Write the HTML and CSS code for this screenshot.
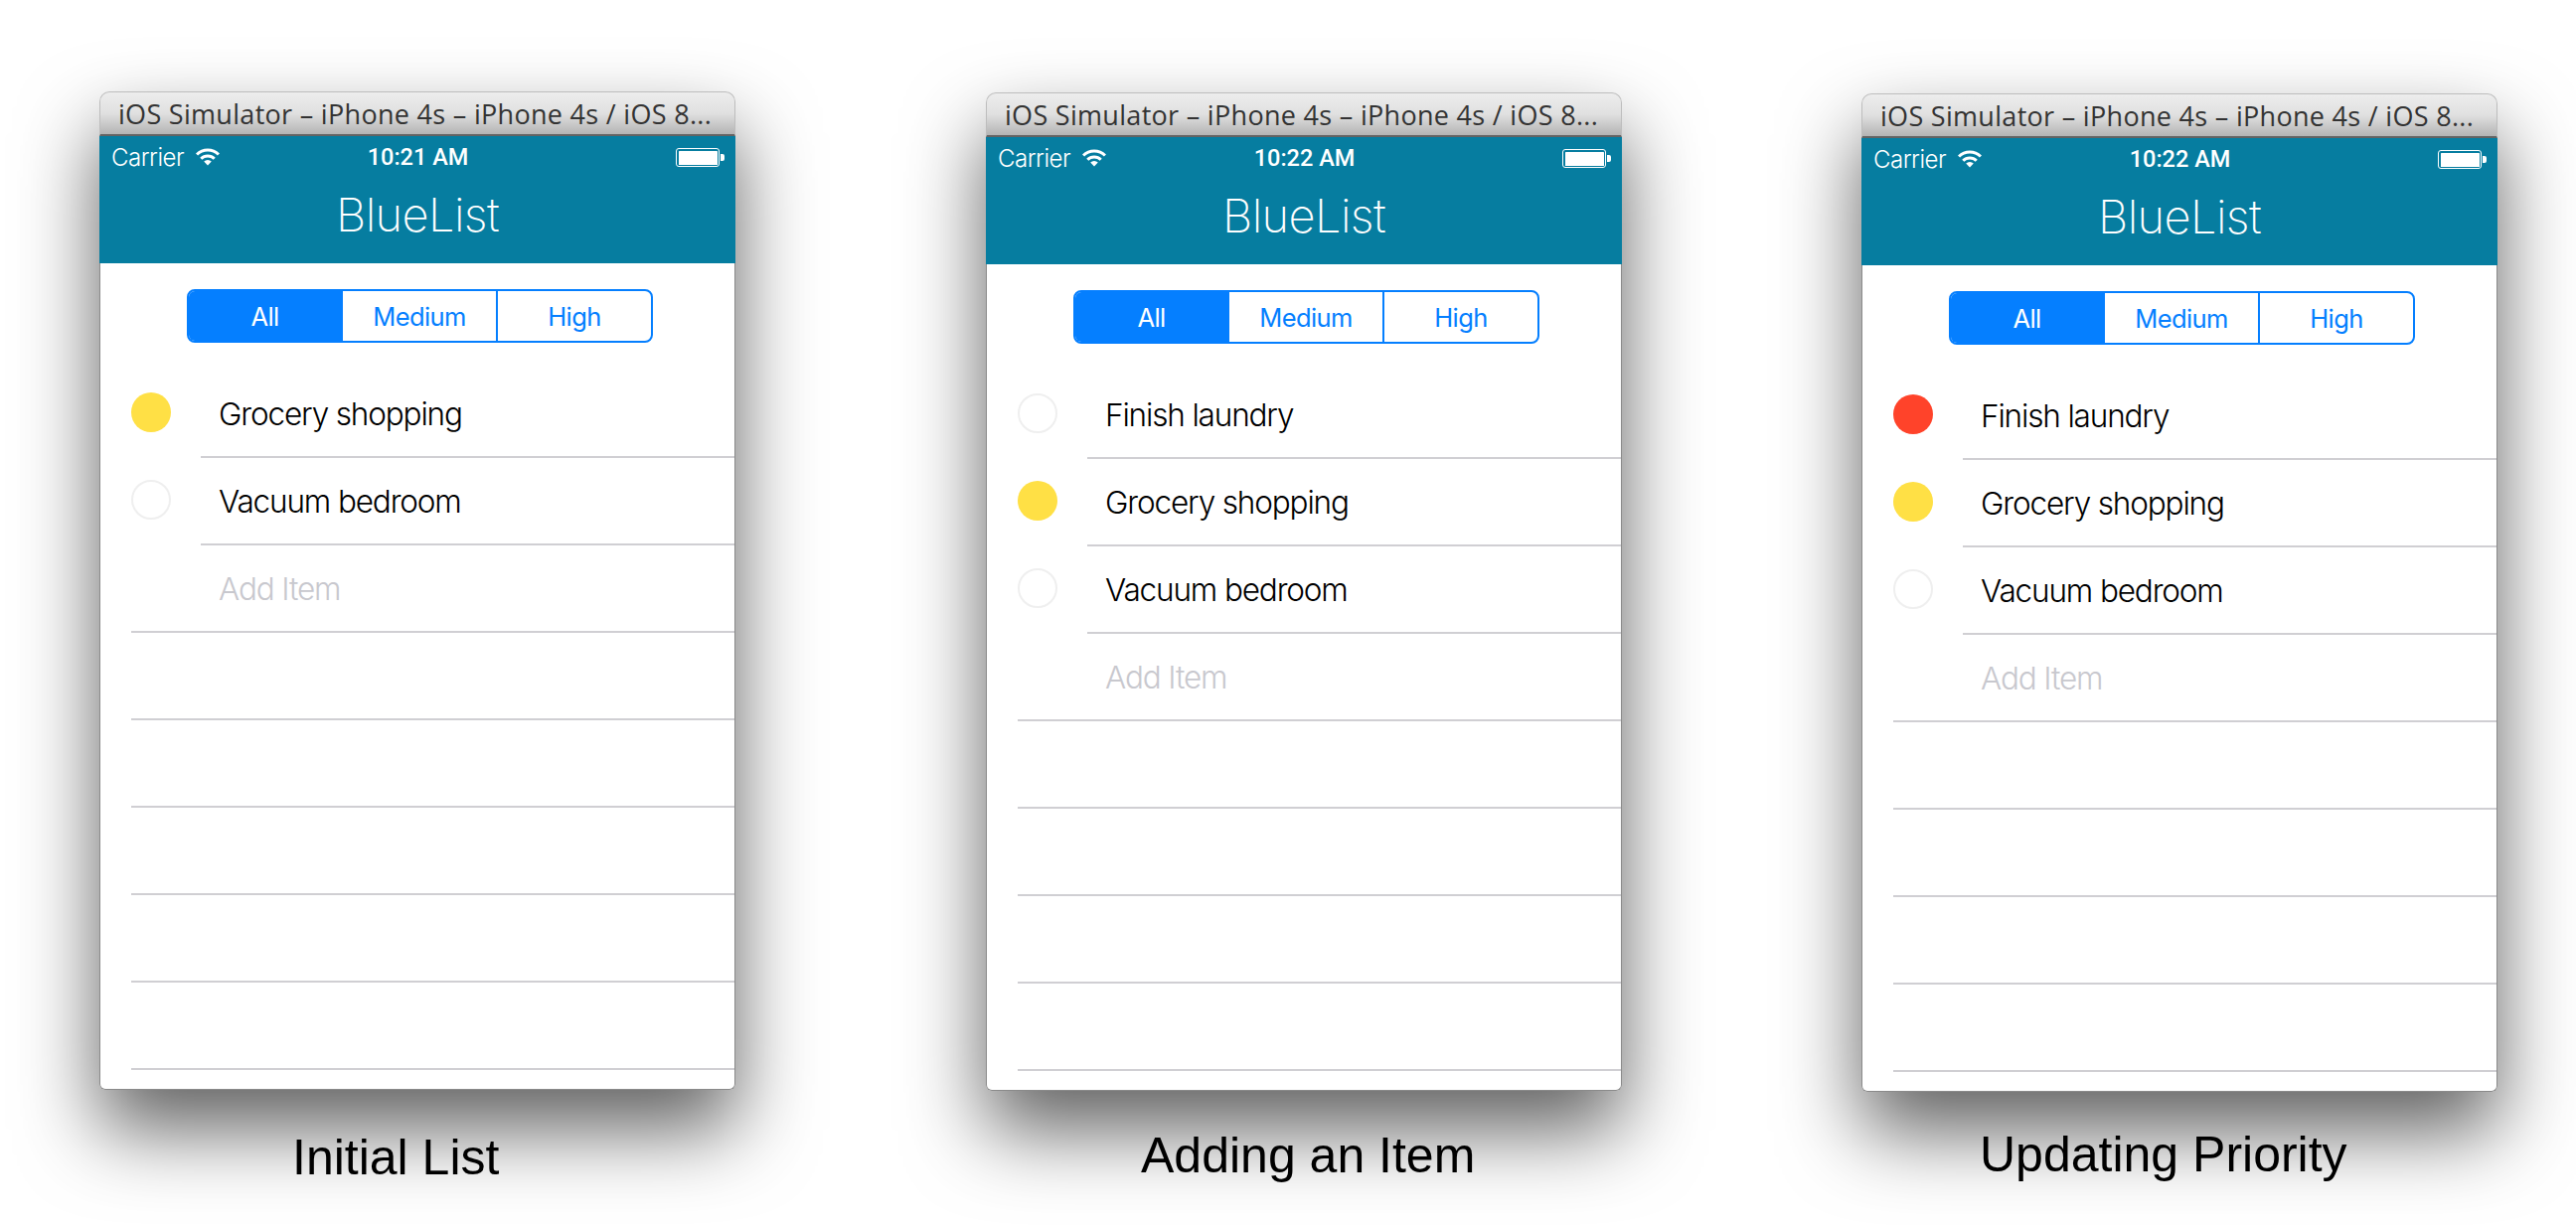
FILE: index.html
```html
<!DOCTYPE html>
<html lang="en">

<head>
    <meta charset="UTF-8">
    <title>BlueList</title>
    <link rel="stylesheet" href="styles.css">
</head>

<body>
    <svg class="defs" width="0" height="0">
        <symbol id="wifi" viewBox="0 0 24 18">
            <path d="M1.04 6.54a15.5 15.5 0 0 1 21.92 0" fill="none" stroke="#fff" stroke-width="3" />
            <path d="M5.28 10.78a9.5 9.5 0 0 1 13.44 0" fill="none" stroke="#fff" stroke-width="3" />
            <path d="M8.2 13.6a5.4 5.4 0 0 1 7.6 0L12 17.6z" fill="#fff" />
        </symbol>
    </svg>

    <!-- first shot -->
    <div class="sim sim-1">
        <div class="titlebar">iOS Simulator – iPhone 4s – iPhone 4s / iOS 8...</div>
        <div class="nav">
            <div class="status">
                <div class="carrier">Carrier <svg class="wifi"><use href="#wifi" /></svg></div>
                <div class="time">10:21 AM</div>
                <div class="battery"><span class="battery-fill"></span></div>
            </div>
            <div class="app-title">BlueList</div>
        </div>
        <div class="content">
            <div class="segments">
                <div class="seg seg-on">All</div>
                <div class="seg">Medium</div>
                <div class="seg">High</div>
            </div>
            <div class="list">
                <div class="row"><span class="dot dot-yellow"></span><div class="row-body">Grocery shopping</div></div>
                <div class="row"><span class="dot"></span><div class="row-body">Vacuum bedroom</div></div>
                <div class="row row-add"><div class="row-body">Add Item</div></div>
                <div class="row row-add"><div class="row-body"></div></div>
                <div class="row row-add"><div class="row-body"></div></div>
                <div class="row row-add"><div class="row-body"></div></div>
                <div class="row row-add"><div class="row-body"></div></div>
                <div class="row row-add"><div class="row-body"></div></div>
            </div>
        </div>
    </div>

    <!-- second shot -->
    <div class="sim sim-2">
        <div class="titlebar">iOS Simulator – iPhone 4s – iPhone 4s / iOS 8...</div>
        <div class="nav">
            <div class="status">
                <div class="carrier">Carrier <svg class="wifi"><use href="#wifi" /></svg></div>
                <div class="time">10:22 AM</div>
                <div class="battery"><span class="battery-fill"></span></div>
            </div>
            <div class="app-title">BlueList</div>
        </div>
        <div class="content">
            <div class="segments">
                <div class="seg seg-on">All</div>
                <div class="seg">Medium</div>
                <div class="seg">High</div>
            </div>
            <div class="list">
                <div class="row"><span class="dot"></span><div class="row-body">Finish laundry</div></div>
                <div class="row"><span class="dot dot-yellow"></span><div class="row-body">Grocery shopping</div></div>
                <div class="row"><span class="dot"></span><div class="row-body">Vacuum bedroom</div></div>
                <div class="row row-add"><div class="row-body">Add Item</div></div>
                <div class="row row-add"><div class="row-body"></div></div>
                <div class="row row-add"><div class="row-body"></div></div>
                <div class="row row-add"><div class="row-body"></div></div>
                <div class="row row-add"><div class="row-body"></div></div>
            </div>
        </div>
    </div>

    <!-- third shot -->
    <div class="sim sim-3">
        <div class="titlebar">iOS Simulator – iPhone 4s – iPhone 4s / iOS 8...</div>
        <div class="nav">
            <div class="status">
                <div class="carrier">Carrier <svg class="wifi"><use href="#wifi" /></svg></div>
                <div class="time">10:22 AM</div>
                <div class="battery"><span class="battery-fill"></span></div>
            </div>
            <div class="app-title">BlueList</div>
        </div>
        <div class="content">
            <div class="segments">
                <div class="seg seg-on">All</div>
                <div class="seg">Medium</div>
                <div class="seg">High</div>
            </div>
            <div class="list">
                <div class="row"><span class="dot dot-red"></span><div class="row-body">Finish laundry</div></div>
                <div class="row"><span class="dot dot-yellow"></span><div class="row-body">Grocery shopping</div></div>
                <div class="row"><span class="dot"></span><div class="row-body">Vacuum bedroom</div></div>
                <div class="row row-add"><div class="row-body">Add Item</div></div>
                <div class="row row-add"><div class="row-body"></div></div>
                <div class="row row-add"><div class="row-body"></div></div>
                <div class="row row-add"><div class="row-body"></div></div>
                <div class="row row-add"><div class="row-body"></div></div>
            </div>
        </div>
    </div>

    <div class="caption caption-1">Initial List</div>
    <div class="caption caption-2">Adding an Item</div>
    <div class="caption caption-3">Updating Priority</div>
</body>

</html>
```

FILE: styles.css
```css
:root {
    --teal: #067da0;
    --blue: #057fff;
    --line: #d0cfd3;
    --light: Inter, Roboto, "Liberation Sans", sans-serif;
}

body {
    margin: 0;
    height: 1233px;
    overflow: hidden;
    position: relative;
    background: #fff;
    font-family: "Liberation Sans", sans-serif;
}

.defs {
    position: absolute;
}

/* the three windows sit on a free canvas */
.sim {
    position: absolute;
    width: 640px;
    border-radius: 10px 10px 6px 6px;
    box-shadow: 0 40px 80px rgba(0, 0, 0, 0.62);
}

.sim-1 {
    left: 100px;
    top: 92px;
}

.sim-2 {
    left: 992px;
    top: 93px;
}

.sim-3 {
    left: 1873px;
    top: 94px;
}

.titlebar {
    box-sizing: border-box;
    height: 45px;
    padding: 4px 0 0 18px;
    border: 1px solid #bdbdbd;
    border-bottom: 2px solid #636363;
    border-radius: 10px 10px 0 0;
    background: linear-gradient(#ededed, #e0e0e0 50%, #b4b4b4);
    color: #333;
    font-family: "Open Sans", sans-serif;
    font-size: 27px;
    letter-spacing: 0.3px;
    line-height: 36px;
    white-space: nowrap;
    overflow: hidden;
}

.nav {
    height: 128px;
    background: var(--teal);
    color: #fff;
}

.status {
    display: flex;
    align-items: center;
    justify-content: space-between;
    height: 40px;
    padding: 1px 11px 0 12px;
}

.carrier {
    display: flex;
    align-items: center;
    gap: 12px;
    width: 180px;
    font-family: var(--light);
    font-weight: 300;
    font-size: 24px;
    letter-spacing: -0.5px;
}

.wifi {
    width: 24px;
    height: 18px;
}

.time {
    font-family: Roboto, sans-serif;
    font-weight: 500;
    font-size: 23.5px;
}

.battery {
    display: flex;
    justify-content: flex-end;
    width: 180px;
    position: relative;
}

.battery-fill {
    box-sizing: border-box;
    width: 44px;
    height: 19px;
    border: 1.5px solid #fff;
    border-radius: 3px;
    background: #fff;
    background-clip: content-box;
    padding: 1.5px;
    margin-right: 5px;
}

.battery::after {
    content: "";
    position: absolute;
    right: 0;
    top: 6px;
    width: 4px;
    height: 7px;
    background: #fff;
    border-radius: 0 2px 2px 0;
}

.app-title {
    margin-top: 9px;
    text-align: center;
    font-family: var(--light);
    font-weight: 200;
    font-size: 47px;
    letter-spacing: -0.6px;
    line-height: 58px;
}

.content {
    height: 832px;
    box-sizing: border-box;
    padding-top: 26px;
    background: #fff;
    border: 1px solid #8a8a8a;
    border-width: 0 1px 1px;
    border-radius: 0 0 6px 6px;
}

.segments {
    display: flex;
    box-sizing: border-box;
    width: 469px;
    height: 54px;
    margin: 0 0 0 87px;
    border: 2px solid var(--blue);
    border-radius: 8px;
    color: var(--blue);
    font-family: var(--light);
    font-weight: 400;
    font-size: 25.5px;
    letter-spacing: -0.6px;
    overflow: hidden;
}

.seg {
    flex: 1;
    display: flex;
    align-items: center;
    justify-content: center;
    border-left: 2px solid var(--blue);
}

.seg-on {
    flex: 0 0 153px;
    border-left: 0;
    background: var(--blue);
    color: #fff;
}

.list {
    margin-top: 28px;
}

.row {
    display: flex;
    align-items: stretch;
    height: 88px;
    padding-left: 31px;
}

.dot {
    box-sizing: border-box;
    flex: 0 0 40px;
    width: 40px;
    height: 40px;
    margin-top: 22px;
    border: 2px solid #efefef;
    border-radius: 50%;
}

.dot-yellow {
    border: 0;
    background: #ffe045;
}

.dot-red {
    border: 0;
    background: #ff432a;
}

.row-body {
    flex: 1;
    box-sizing: border-box;
    display: flex;
    align-items: center;
    margin-left: 30px;
    padding-left: 18px;
    border-bottom: 2px solid var(--line);
    font-family: var(--light);
    font-weight: 300;
    font-size: 31.5px;
    letter-spacing: -1.15px;
    color: #000;
}

.row-add .row-body {
    margin-left: 0;
    padding-left: 88px;
    color: #c8c8ce;
}

/* labels under the shots */
.caption {
    position: absolute;
    font-size: 50px;
    line-height: 56px;
    color: #000;
    white-space: nowrap;
}

.caption-1 {
    left: 294px;
    top: 1137px;
}

.caption-2 {
    left: 1148px;
    top: 1135px;
}

.caption-3 {
    left: 1992px;
    top: 1134px;
}
```
